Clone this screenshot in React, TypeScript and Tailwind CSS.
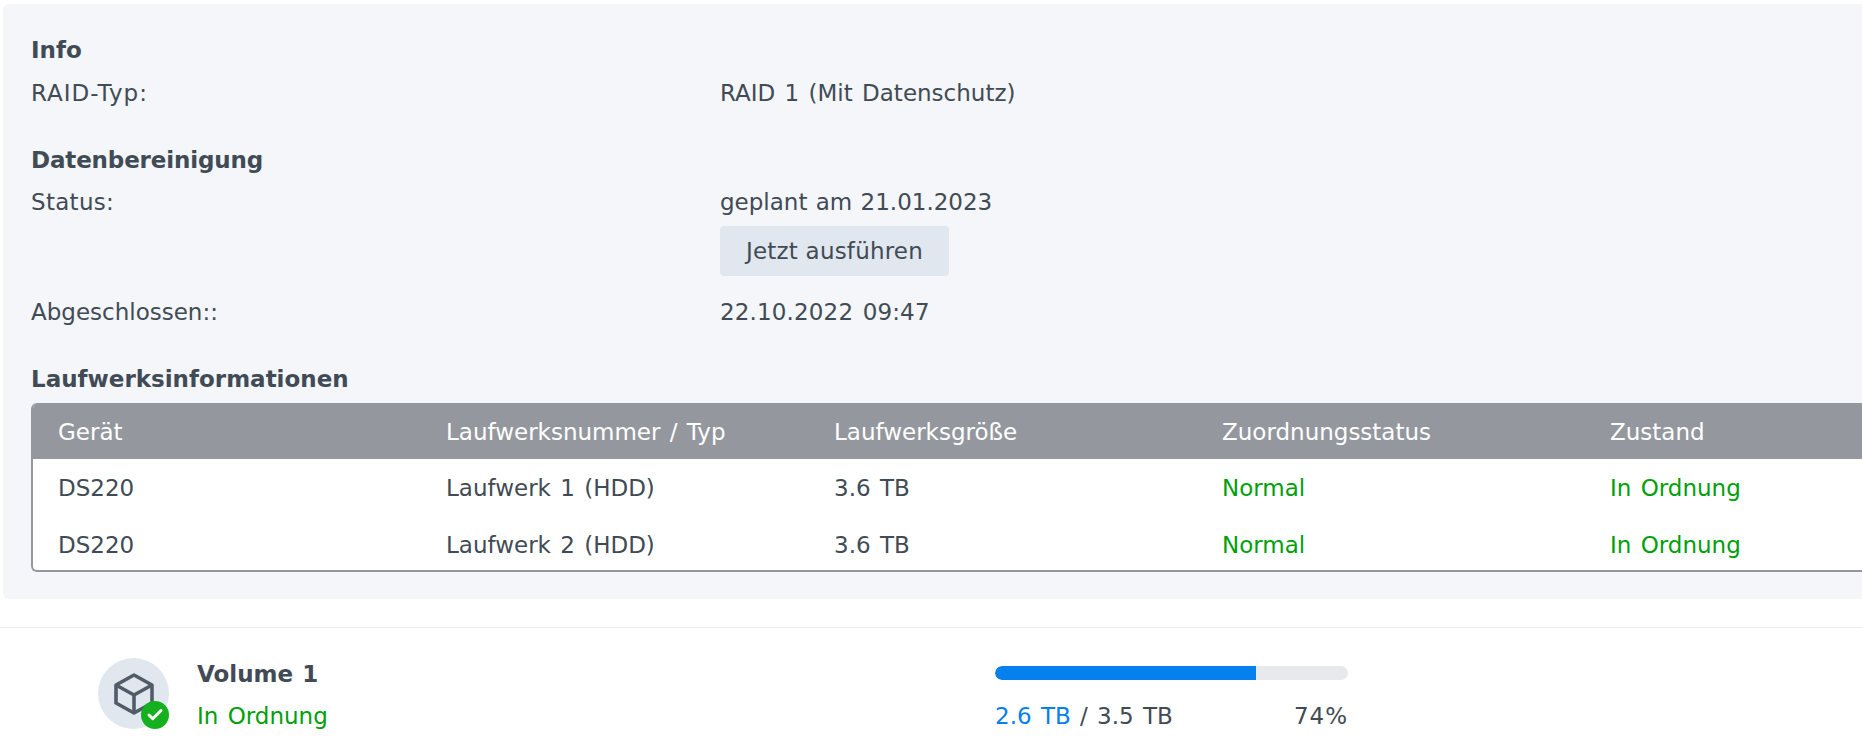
import { Check } from "lucide-react";

const drives = [
  { name: "DS220", drive: "Laufwerk 1 (HDD)" },
  { name: "DS220", drive: "Laufwerk 2 (HDD)" },
];

const Volume_icon = () => (
  <div className="relative w-[71px] h-[71px] rounded-full bg-[#e1e7ef] flex justify-center items-center shrink-0">
    <svg width="44" height="44" viewBox="0 0 44 44" fill="none" stroke="#525c68" strokeWidth="3.6" strokeLinejoin="round">
      <path d="M22 3 L40 13 V31 L22 41 L4 31 V13 Z" />
      <path d="M4 13 L22 23 L40 13 M22 23 V41" />
    </svg>
    <div className="absolute right-0 bottom-0 w-[28px] h-[28px] rounded-full bg-[#14b01e] flex justify-center items-center">
      <Check size={18} color="white" strokeWidth={4} />
    </div>
  </div>
);

const App = () => {
  return (
    <div className="w-[1862px] h-[751px] overflow-hidden bg-white font-['DejaVu_Sans',sans-serif] text-[23px] text-[#414b55] [word-spacing:2px]">
      <div className="w-[2000px] ml-[3px] mt-[4px] h-[595px] bg-[#f4f6fa] rounded-[6px] pl-[28px] pt-[25px] flex flex-col">
        <h3 className="h-[42px] leading-[42px] font-bold">Info</h3>
        <div className="flex h-[42px] leading-[44px]">
          <p className="w-[689px] tracking-[1px]">RAID-Typ:</p>
          <p>RAID 1 (Mit Datenschutz)</p>
        </div>

        <h3 className="mt-[25px] h-[42px] leading-[44px] font-bold tracking-[-0.15px]">Datenbereinigung</h3>
        <div className="flex h-[42px] leading-[44px]">
          <p className="w-[689px] tracking-[0.3px]">Status:</p>
          <p className="[word-spacing:1px]">geplant am 21.01.2023</p>
        </div>
        <div className="pl-[689px] mt-[4px]">
          <button className="h-[50px] w-[229px] bg-[#e1e7ef] rounded-[4px] text-[#414b55] pt-[1px] tracking-[0.2px]">Jetzt ausführen</button>
        </div>
        <div className="flex h-[42px] leading-[44px] mt-[14px]">
          <p className="w-[689px]">Abgeschlossen::</p>
          <p className="tracking-[0.15px]">22.10.2022 09:47</p>
        </div>

        <h3 className="mt-[26px] h-[42px] leading-[42px] font-bold">Laufwerksinformationen</h3>
        <div className="w-[1950px] h-[169px] mt-[3px] bg-white rounded-[6px] border-l-2 border-b-2 border-[#94989e] overflow-hidden">
          <div className="grid grid-cols-[388px_388px_388px_388px_388px] h-[56px] items-center bg-[#94989e] text-white pl-[25px] pt-[2px]">
            <p>Gerät</p>
            <p>Laufwerksnummer / Typ</p>
            <p>Laufwerksgröße</p>
            <p>Zuordnungsstatus</p>
            <p>Zustand</p>
          </div>
          {drives.map((d) => (
            <div key={d.drive} className="grid grid-cols-[388px_388px_388px_388px_388px] h-[57px] items-center pl-[25px] pt-[1px]">
              <p>{d.name}</p>
              <p>{d.drive}</p>
              <p>3.6 TB</p>
              <p className="text-[#009f0c]">Normal</p>
              <p className="text-[#009f0c]">In Ordnung</p>
            </div>
          ))}
        </div>
      </div>

      <div className="mt-[28px] border-t border-[#e9edf2] pt-[30px] pl-[98px] flex">
        <Volume_icon />
        <div className="ml-[28px] w-[798px]">
          <p className="font-bold h-[30px] leading-[32px] [word-spacing:1px]">Volume 1</p>
          <p className="text-[#009f0c] mt-[13px] h-[30px] leading-[30px]">In Ordnung</p>
        </div>
        <div className="w-[353px] pt-[8px]">
          <div className="h-[14px] rounded-full bg-[#e7e9ec] overflow-hidden">
            <div className="h-full w-[261px] bg-[#0680ee] rounded-l-full"></div>
          </div>
          <div className="flex justify-between mt-[21px] h-[30px] leading-[30px]">
            <p><span className="text-[#0680ee]">2.6 TB</span> / 3.5 TB</p>
            <p className="tracking-[1px]">74%</p>
          </div>
        </div>
      </div>
    </div>
  );
};

export default App;
